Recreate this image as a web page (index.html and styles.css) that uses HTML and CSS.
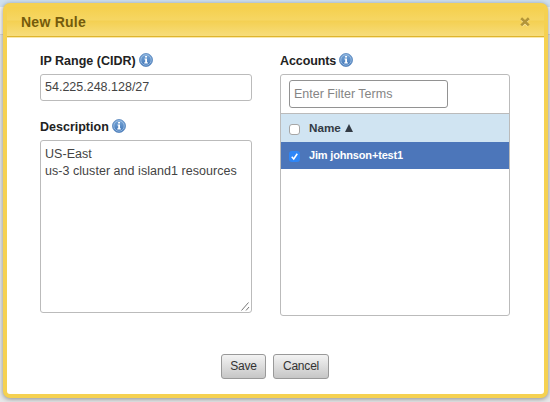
FILE: index.html
```html
<!DOCTYPE html>
<html lang="en">
<head>
<meta charset="utf-8">
<title>New Rule</title>
<link rel="stylesheet" href="styles.css">
</head>
<body>
<svg width="0" height="0" class="defs">
  <defs>
    <linearGradient id="blue" x1="0" y1="0" x2="0" y2="1"><stop offset="0" stop-color="#7ba8d8"/><stop offset="1" stop-color="#3c72b5"/></linearGradient>
    <symbol id="info" viewBox="0 0 14 14">
      <circle cx="7" cy="7" r="6.5" fill="url(#blue)" stroke="#5684bd" stroke-width=".8"/>
      <circle cx="7" cy="7" r="5.2" fill="none" stroke="#a5c4e6" stroke-width=".8"/>
      <path d="M6.1 3.1h1.9v1.5H6.1zM5.5 5.6H8v3.7h.8v1.1H5.3V9.3h.9V6.6h-.7z" fill="#fff"/>
    </symbol>
  </defs>
</svg>
<div class="dialog">
  <header class="title-bar">
    <h1 class="title">New Rule</h1>
    <svg class="close" viewBox="0 0 10 10"><path d="M1.8 2.6l6.4 6.2M8.2 2.6L1.8 8.8" stroke="#fbe9a5" stroke-width="2.7"/><path d="M1.2 1.2l7.6 7.2M8.8 1.2L1.2 8.4" stroke="#b29539" stroke-width="2.6"/></svg>
  </header>
  <main class="form">
    <section class="left">
      <div class="label"><span>IP Range (CIDR)</span><svg class="info"><use href="#info"/></svg></div>
      <div class="input">54.225.248.128/27</div>
      <div class="label second"><span>Description</span><svg class="info"><use href="#info"/></svg></div>
      <div class="textarea"><div class="text">US-East<br>us-3 cluster and island1 resources</div>
        <svg class="grip" viewBox="0 0 9 9"><path d="M.5 8.5l7-8M5 8.5l3-3.5" stroke="#777" stroke-width="1"/></svg>
      </div>
    </section>
    <section class="right">
      <div class="label accounts"><span>Accounts</span><svg class="info"><use href="#info"/></svg></div>
      <div class="list">
        <div class="filter"><div class="filter-input">Enter Filter Terms</div></div>
        <div class="row head"><span class="check"></span><span class="name">Name</span><svg class="sort" viewBox="0 0 9 9"><path d="M4.5 0L9 9H0z" fill="#333b45"/></svg></div>
        <div class="row selected"><span class="check on"><svg viewBox="0 0 10 10"><path d="M2.5 5.3l1.8 2 3.2-4.8" fill="none" stroke="#fff" stroke-width="1.4"/></svg></span><span class="account">Jim johnson+test1</span></div>
      </div>
    </section>
  </main>
  <footer class="actions"><div class="button save">Save</div><div class="button cancel">Cancel</div></footer>
</div>
</body>
</html>
```
FILE: styles.css
```css
* { box-sizing: border-box; }
body {
  margin: 0;
  width: 550px;
  height: 402px;
  padding: 3px 2px 4px 3px;
  overflow: hidden;
  font: 12.5px "Liberation Sans", Arial, sans-serif;
  color: #444;
  background: linear-gradient(#cfe0f0 0 7px, #f5f5f5 7px 34px, #d5d7d9 34px 35px, #e6e8e9 35px);
}
.defs { position: absolute; }
.dialog {
  height: 395px;
  width: 545px;
  border: 4px solid #f5d151;
  border-radius: 7px;
  background: #fff;
  box-shadow: 0 1px 5px rgba(0,0,0,.4);
}
.title-bar {
  height: 31px;
  display: flex;
  align-items: center;
  justify-content: space-between;
  padding: 0 14px;
  background: linear-gradient(#f5d04d, #f6d663 13px, #f4d052 14px, #f7dd7b 29px, #dfb52d 29px, #dfb52d 30px, #f9e8ad 30px);
}
.title { margin: 0; font-size: 14px; line-height: 16px; color: #745b0c; letter-spacing: .25px; white-space: nowrap; position: relative; top: -1px; }
.close { width: 10px; height: 10px; margin-top: -2px; }
.form { display: flex; gap: 28px; padding: 14px 0 0 33px; height: 309px; }
.left { width: 212px; }
.right { width: 230px; }
.label { display: flex; align-items: center; gap: 3px; height: 16px; margin-bottom: 6px; font-weight: bold; color: #222; white-space: nowrap; }
.label span { line-height: 14px; padding-top: 1px; }
.accounts span { letter-spacing: -.1px; }
.second { margin-top: 17px; }
.info { width: 14px; height: 14px; flex: none; }
.input, .textarea, .list { border: 1px solid #bbb; border-radius: 3px; }
.input { height: 27px; padding: 0 4px; line-height: 25px; }
.textarea { height: 173px; padding: 5px 4px; line-height: 17px; position: relative; white-space: nowrap; letter-spacing: .04px; }
.grip { position: absolute; right: 1px; bottom: 1px; width: 9px; height: 9px; }
.list { height: 242px; overflow: hidden; }
.filter { height: 39px; padding: 5px 8px; border-bottom: 1px solid #bbb; }
.filter-input { width: 159px; height: 28px; border: 1px solid #929292; border-radius: 3px; padding-left: 4px; line-height: 26px; color: #858585; white-space: nowrap; }
.row { display: flex; align-items: center; padding-left: 8px; height: 28px; font-weight: bold; font-size: 11px; white-space: nowrap; }
.head { background: #d0e4f2; color: #333b45; }
.name { font-size: 11.7px; margin-top: -1px; }
.selected { height: 27px; background: #4c76ba; color: #fff; }
.account { letter-spacing: -.17px; margin-top: -1px; }
.check { width: 11px; height: 11px; border: 1px solid #a6a6a6; border-radius: 3px; background: #fff; margin-right: 9px; margin-top: 2px; }
.check.on { border: 0; background: #2e86f7; }
.check svg { display: block; width: 11px; height: 11px; }
.sort { width: 8px; height: 8px; margin-left: 4px; margin-top: -1px; }
.actions { display: flex; gap: 7px; margin-left: 214px; margin-top: -3px; padding-top: 10px; }
.button { height: 25px; border: 1px solid #999; border-radius: 3px; background: linear-gradient(#f3f3f3, #c6c6c6); color: #333; text-align: center; font-size: 12px; letter-spacing: -.2px; line-height: 23px; }
.save { width: 45px; }
.cancel { width: 56px; }
```
